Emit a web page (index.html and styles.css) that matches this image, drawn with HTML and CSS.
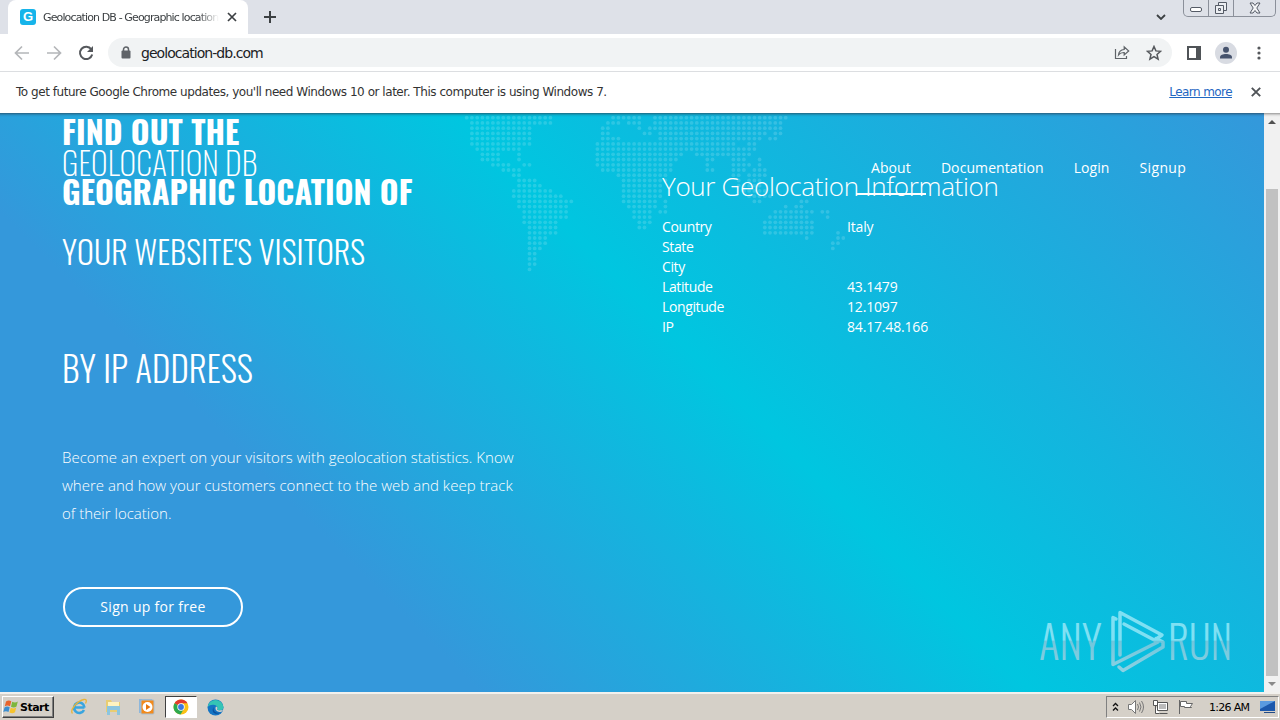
FILE: index.html
```html
<!DOCTYPE html>
<html lang="en">
<head>
    <meta charset="UTF-8" />
    <title>Geolocation DB - Geographic location</title>
    <link rel="stylesheet" href="styles.css">
</head>
<body>
<div class="tabstrip">
    <div class="tab">
        <span class="favicon">G</span>
        <span class="tab-title">Geolocation DB - Geographic location</span>
        <svg class="tab-close" width="10" height="10" viewBox="0 0 10 10"><path d="M1 1l8 8M9 1l-8 8" stroke="#3c4043" stroke-width="1.7"/></svg>
    </div>
    <svg class="new-tab" width="12" height="12" viewBox="0 0 12 12"><path d="M6 0v12M0 6h12" stroke="#3c4043" stroke-width="2"/></svg>
    <svg class="tab-search" width="10" height="6" viewBox="0 0 10 6"><path d="M1 1l4 4 4-4" fill="none" stroke="#3c4043" stroke-width="1.8"/></svg>
    <div class="window-buttons">
        <span class="win-min"><svg width="13" height="6"><rect x=".5" y=".5" width="11" height="4" rx="1.5" fill="#fff" stroke="#555b66"/></svg></span>
        <span class="win-max"><svg width="14" height="14" fill="#eceef2" stroke="#555b66"><path d="M4.500 1.500h8v8h-8z"/><path d="M1.500 4.500h8v8h-8z"/><path d="M4.500 7.500h2v2h-2z"/></svg></span>
        <span class="win-close"><svg width="12" height="12" viewBox="0 0 12 12"><path d="M1 1h3l2 2.500 2-2.500h3L7.800 6 11 11H8L6 8.500 4 11H1l3.200-5z" fill="#f4f5f7" stroke="#555b66"/></svg></span>
    </div>
</div>

<div class="toolbar">
    <svg class="nav-icon" width="16" height="16" viewBox="0 0 16 16" fill="none" stroke="#b4b6b9" stroke-width="1.700"><path d="M15 8H2M8 1.500L1.500 8 8 14.500"/></svg>
    <svg class="nav-icon" width="16" height="16" viewBox="0 0 16 16" fill="none" stroke="#b4b6b9" stroke-width="1.700"><path d="M1 8h13M8 1.500L14.500 8 8 14.500"/></svg>
    <svg class="nav-icon" width="16" height="16" viewBox="0 0 16 16"><path d="M13.300 4.300A6.200 6.200 0 1 0 14.200 9.500" fill="none" stroke="#55585c" stroke-width="2"/><path d="M15 1v6H9z" fill="#55585c"/></svg>
    <div class="omnibox">
        <svg width="10" height="13" viewBox="0 0 10 13"><path d="M2.500 6V3.500a2.500 2.500 0 0 1 5 0V6" fill="none" stroke="#5f6368" stroke-width="1.500"/><rect x=".5" y="4.500" width="9" height="8" rx="1" fill="#5f6368"/></svg>
        <span class="url">geolocation-db.com</span>
        <svg class="share" width="16" height="15" viewBox="0 0 16 15" fill="none" stroke="#5f6368" stroke-width="1.200"><path d="M1.500 4v9.500h11V11"/><path d="M4.500 10c.3-3.500 2.500-5.300 5.700-5.500V1.800L14.700 6l-4.500 4V7.500C7.500 7.400 5.800 8.200 4.500 10z"/></svg>
        <svg width="16" height="16" viewBox="0 0 16 16"><path d="M8 1.500l1.900 4.400 4.700.4-3.600 3.100 1.100 4.700L8 11.600l-4.100 2.500L5 9.400 1.400 6.300l4.700-.4z" fill="none" stroke="#55585c" stroke-width="1.500"/></svg>
    </div>
    <svg class="side-panel" width="14" height="14" viewBox="0 0 14 14"><path d="M1 1h12v12H1z" fill="none" stroke="#4f5357" stroke-width="2"/><path d="M9 1h4v12H9z" fill="#4f5357"/></svg>
    <svg class="avatar" width="22" height="22" viewBox="0 0 22 22"><circle cx="11" cy="11" r="11" fill="#d8dbe2"/><circle cx="11" cy="7.800" r="3" fill="#46536d"/><path d="M5 16.500v-1.300c0-2 3-3.200 6-3.200s6 1.200 6 3.200v1.300z" fill="#46536d"/></svg>
    <svg class="menu-dots" width="4" height="14" viewBox="0 0 4 14" fill="#55585c"><circle cx="2" cy="2" r="1.600"/><circle cx="2" cy="7" r="1.600"/><circle cx="2" cy="12" r="1.600"/></svg>
</div>

<div class="infobar">
    <span class="infobar-text">To get future Google Chrome updates, you'll need Windows 10 or later. This computer is using Windows 7.</span>
    <a class="learn-more">Learn more</a>
    <svg width="10" height="12" viewBox="0 0 10 12"><path d="M.8.8l8.400 8.400M9.200.8L.8 9.200" stroke="#4f5357" stroke-width="1.900"/></svg>
</div>

<div class="viewport">
    <main class="hero">
        <svg class="world-map" id="worldMap" width="400" height="165"></svg>
        <section class="intro">
            <h1>
                <span class="line bold">Find out the</span>
                <span class="line thin brand">Geolocation DB</span>
                <span class="line bold geo">Geographic location of</span>
                <span class="line thin visitors">your website's visitors</span>
                <span class="line thin by-ip">by IP address</span>
            </h1>
            <p>Become an expert on your visitors with geolocation statistics. Know<br>where and how your customers connect to the web and keep track<br>of their location.</p>
            <a class="signup-button">Sign up for free</a>
        </section>
        <section class="info">
            <nav class="site-nav">
                <a class="active">About</a>
                <a>Documentation</a>
                <a>Login</a>
                <a class="signup">Signup</a>
            </nav>
            <h2>Your Geolocation Information</h2>
            <dl>
                <dt>Country</dt><dd>Italy</dd>
                <dt>State</dt><dd></dd>
                <dt>City</dt><dd></dd>
                <dt>Latitude</dt><dd>43.1479</dd>
                <dt>Longitude</dt><dd>12.1097</dd>
                <dt>IP</dt><dd>84.17.48.166</dd>
            </dl>
        </section>
        <svg class="watermark" width="200" height="70" viewBox="0 0 200 70">
            <defs>
                <linearGradient id="wm" x1="0" y1="0" x2="0" y2="70" gradientUnits="userSpaceOnUse">
                    <stop offset="0.500" stop-color="#7fe0f3"/>
                    <stop offset="0.520" stop-color="#70c6dc"/>
                    <stop offset="1" stop-color="#8ed3e4"/>
                </linearGradient>
            </defs>
            <g fill="url(#wm)" font-family="Oswald, 'Open Sans'" font-size="46" font-weight="350">
                <text x="3" y="54.500" textLength="63" lengthAdjust="spacingAndGlyphs">ANY</text>
                <text x="132" y="54.500" textLength="64" lengthAdjust="spacingAndGlyphs">RUN</text>
            </g>
            <g fill="none" stroke="url(#wm)" stroke-width="3.500" stroke-linejoin="round" stroke-linecap="round">
                <path d="M80 14l-3-1.500v47L122 37 88 19"/>
                <path d="M84 50V7.500L126 30l-5 3.500"/>
                <path d="M83 62l4 3.500L127 42v-5l-7-3.500"/>
            </g>
        </svg>
    </main>
    <div class="scrollbar">
        <span class="arrow up"></span>
        <span class="thumb"></span>
        <span class="arrow down"></span>
    </div>
</div>

<footer class="taskbar">
    <div class="start">
        <svg width="17" height="16" viewBox="0 0 17 16"><path d="M3 2.500c2-1.500 3.700-1.300 5.300-.3L7 7.200C5.300 6.200 3.600 6.100 1.800 7.300z" fill="#e8642c"/><path d="M9.200 2.700c2 1 3.700 1 5.600-.2l-1.300 5c-1.900 1.200-3.600 1.100-5.500.2z" fill="#7db63c"/><path d="M1.500 8.400C3.300 7.200 5 7.300 6.700 8.300l-1.200 4.700C3.800 12 2 12 .3 13z" fill="#3c8ed0"/><path d="M7.700 8.700c1.900.9 3.600 1 5.500-.2L12 13.300c-2 1.300-3.700 1.100-5.500.2z" fill="#f6c32e"/></svg>
        <b>Start</b>
    </div>
    <div class="pinned">
        <span><svg width="18" height="18" viewBox="0 0 18 18"><path d="M14.500 9.500H5M14 12a5.200 5.200 0 1 1 .5-2.500" fill="none" stroke="#39a5df" stroke-width="2.600"/><path d="M2.500 15.500C-.5 12 7 3 14 1.500c3-.5 2.500 2 1.500 4" fill="none" stroke="#e8b43a" stroke-width="1.300"/></svg></span>
        <span><svg width="18" height="18" viewBox="0 0 18 18"><path d="M2 2h5l1 2h8v10H2z" fill="#e9cd72"/><path d="M4 4h11v4H4z" fill="#fff3bf"/><path d="M3 8h13v9h-3v-5H6v5H3z" fill="#8cc5df"/></svg></span>
        <span><svg width="18" height="18" viewBox="0 0 18 18"><rect x="1" y="1" width="13" height="14" fill="#8db7dc"/><rect x="3" y="2" width="13" height="14" rx="1" fill="#f28a1b" stroke="#a9bed0"/><circle cx="9.500" cy="9" r="5" fill="#fff"/><path d="M8 6l4.500 3L8 12z" fill="#e8760c"/></svg></span>
        <span class="current"><svg width="16" height="16" viewBox="0 0 16 16"><circle cx="8" cy="8" r="7.500" fill="#fbc116"/><path d="M8 8L1.500 4.250A7.500 7.500 0 0 1 14.500 4.250H8z" fill="#e33b2e"/><path d="M8 8L1.500 4.250A7.500 7.500 0 0 0 7.500 15.500L11 9.800z" fill="#2da94f"/><circle cx="8" cy="8" r="3.700" fill="#fff"/><circle cx="8" cy="8" r="2.900" fill="#3c78e0"/></svg></span>
        <span><svg width="17" height="17" viewBox="0 0 17 17"><circle cx="8.500" cy="8.500" r="8" fill="#1474c4"/><path d="M.6 8A8 8 0 0 1 16.500 8c0 2.500-2 3.500-4.500 3.300-2-.2-2-1.300-1.500-2.300C11 6 4 4 .6 8z" fill="#35c4b5"/><path d="M7 8c-1.500 3 1 7 6.500 5.500C9 17 3 13 7 8z" fill="#0c4f9c"/><path d="M9 7.500c2 .5 1.500 2 1 3 1.500 1.500 4.500 1 6 0l-.8 2C11 14 7 11 9 7.500z" fill="#d6d3cc"/></svg></span>
    </div>
    <div class="tray">
        <svg width="7" height="10" viewBox="0 0 7 10" fill="none" stroke="#111" stroke-width="1.300"><path d="M1 4l2.500-2.500L6 4M1 8.500L3.500 6 6 8.500"/></svg>
        <svg width="17" height="16" viewBox="0 0 17 16" fill="none" stroke="#777"><path d="M1.500 5.500h3l4-4v13l-4-4h-3z" fill="#fff"/><path d="M10.500 5q2 3 0 6M12.500 3.500q3 4.500 0 9M14.500 2q4 6 0 12"/></svg>
        <svg width="17" height="16" viewBox="0 0 17 16" fill="#fff" stroke="#555"><path d="M5.500 3.500h10v8h-10zM7.500 14.500h8M1.500 1.500h4v5h-4zM3.500 6.500v8h4"/><path d="M7 5h7v5H7z" fill="#bbb" stroke="none"/></svg>
        <svg width="17" height="16" viewBox="0 0 17 16" fill="#fff" stroke="#666"><path d="M2.500 1v14"/><path d="M3.500 2.500h6v2h6l-2 3 1 1h-7v-1h-4z"/></svg>
        <span class="clock">1:26 AM</span>
        <svg width="16" height="14" viewBox="0 0 16 14"><path d="M0 1h15v10H0z" fill="#1c58ac"/><path d="M0 1h15L0 9z" fill="#5a9ae0"/><path d="M4 12h11v1H4z" fill="#234b85"/></svg>
    </div>
</footer>

<script>
    // column ranges of the dots, one entry per row
    const rows = [
        [[0,16],[28,33],[36,61]],
        [[1,16],[27,29],[31,33],[36,60]],
        [[1,12],[26,27],[33,33],[35,60]],
        [[1,12],[26,27],[34,35],[37,57],[59,60]],
        [[1,12],[26,29],[37,56],[58,59]],
        [[1,12],[25,51],[54,55]],
        [[2,10],[25,55]],
        [[3,6],[10,10],[25,41],[44,54]],
        [[3,6],[10,10],[25,40],[46,47],[51,53],[56,56]],
        [[5,8],[11,12],[25,39],[46,46],[51,54],[56,56]],
        [[7,10],[26,39],[46,47],[51,53],[55,57]],
        [[9,10],[29,38],[51,52],[54,57]],
        [[10,13],[30,38],[52,52],[54,56]],
        [[10,14],[30,37],[52,56]],
        [[9,16],[30,37],[53,57]],
        [[9,18],[30,37],[54,58]],
        [[10,20],[30,36],[38,38],[55,56],[64,65]],
        [[10,19],[31,36],[38,38],[61,61],[63,64]],
        [[11,19],[32,35],[37,38],[59,66],[68,69]],
        [[11,19],[32,35],[58,65],[69,69]],
        [[11,17],[33,35],[57,66]],
        [[12,17],[33,34],[57,66]],
        [[12,17],[57,66],[71,71]],
        [[12,15],[65,65],[71,72]],
        [[12,15],[70,71]],
        [[12,14],[70,70]],
        [[12,13]],
        [[12,13]],
        [[12,13]],
        [[12,12]]
    ];

    const map = document.getElementById('worldMap');
    let dots = '';
    rows.forEach((ranges, r) => {
        ranges.forEach(([from, to]) => {
            for (let c = from; c <= to; c++) {
                dots += `<circle cx="${(2.7 + c * 5.23).toFixed(1)}" cy="${(4.7 + r * 5.23).toFixed(1)}" r="1.9"/>`;
            }
        });
    });
    map.innerHTML = dots;
</script>
</body>
</html>
```
FILE: styles.css
```css
* {
    box-sizing: border-box;
}
body {
    margin: 0;
    width: 1280px;
    height: 720px;
    overflow: hidden;
    display: flex;
    flex-direction: column;
    font-family: "DejaVu Sans", sans-serif;
    background: #fff;
}
svg {
    flex: none;
    display: block;
}
h1, h2, p, dl, dd {
    margin: 0;
}
.tabstrip {
    height: 34px;
    flex: none;
    background: #dee1e8;
    display: flex;
    padding-left: 8px;
}
.tab {
    width: 240px;
    height: 34px;
    background: #fff;
    border-radius: 8px 8px 0 0;
    display: flex;
    align-items: center;
    padding-left: 12px;
}
.favicon {
    width: 16px;
    height: 16px;
    border-radius: 3px;
    background: #16b4ea;
    color: #fff;
    font: bold 13px/16px "Liberation Sans", sans-serif;
    text-align: center;
}
.tab-title {
    width: 176px;
    margin-left: 7px;
    overflow: hidden;
    white-space: nowrap;
    font-size: 11px;
    letter-spacing: -0.87px;
    color: #3c4043;
    -webkit-mask-image: linear-gradient(90deg, #000 155px, transparent);
}
.tab-close {
    margin-left: 8px;
}
.new-tab {
    margin: 11px 0 0 16px;
}
.tab-search {
    margin: 14px 17px 0 auto;
}
.window-buttons {
    width: 93px;
    height: 17px;
    margin-right: 4px;
    border: 1px solid #8b909a;
    border-top: 0;
    border-radius: 0 0 5px 5px;
    display: flex;
}
.window-buttons span {
    display: flex;
    align-items: center;
    justify-content: center;
    border-right: 1px solid #8b909a;
}
.window-buttons .win-min {
    width: 25px;
    padding-top: 4px;
}
.window-buttons .win-max {
    width: 25px;
}
.window-buttons .win-close {
    flex: 1;
    border: 0;
}
.toolbar {
    height: 38px;
    flex: none;
    display: flex;
    align-items: center;
    padding-left: 14px;
    border-bottom: 1px solid #dcdee1;
}
.nav-icon {
    margin-right: 16px;
}
.omnibox {
    width: 1064px;
    height: 29px;
    margin-left: -2px;
    border-radius: 15px;
    background: #f1f3f4;
    display: flex;
    align-items: center;
    padding: 0 10px 0 13px;
}
.url {
    margin-left: 10px;
    font-size: 14px;
    letter-spacing: -0.95px;
    color: #202124;
}
.share {
    margin: 0 16px 0 auto;
}
.side-panel {
    margin-left: 15px;
}
.avatar {
    margin-left: 14px;
}
.menu-dots {
    margin-left: 20px;
}
.infobar {
    height: 41px;
    flex: none;
    display: flex;
    align-items: center;
    padding: 0 19px 0 16px;
    font-size: 12px;
    color: #333;
    letter-spacing: -0.46px;
    white-space: nowrap;
}
.infobar span, .infobar a {
    padding-bottom: 2px;
}
.learn-more {
    margin: 0 19px 0 auto;
    color: #1f67c2;
    letter-spacing: -0.57px;
    text-decoration: underline;
}
.viewport {
    height: 579px;
    flex: none;
    display: flex;
}
.hero {
    width: 1264px;
    position: relative;
    display: flex;
    overflow: hidden;
    color: #fff;
    font-family: "Open Sans", sans-serif;
    box-shadow: inset 0 5px 3px -4px rgba(40, 60, 80, 0.8);
    background: linear-gradient(45deg, #3498db 0%, #3498db 26%, #00c6e0 56%, #3498db 100%);
}
/* dotted map lies behind both columns */
.world-map {
    position: absolute;
    left: 464px;
    top: 0;
    fill: rgba(255, 255, 255, 0.15);
}
.intro {
    width: 662px;
    padding: 3px 0 0 62px;
    display: flex;
    flex-direction: column;
    align-items: flex-start;
    position: relative;
}
h1 {
    display: flex;
    flex-direction: column;
    align-items: flex-start;
    font-family: Oswald, "Open Sans", sans-serif;
    text-transform: uppercase;
    font-size: 32px;
    letter-spacing: 0.08px;
}
.line {
    height: 30px;
    line-height: 30px;
    white-space: nowrap;
}
.bold {
    font-weight: 700;
}
.thin {
    font-weight: 300;
}
.brand {
    height: 29px;
    margin-top: 1px;
    font-weight: 250;
}
.visitors {
    margin-top: 30px;
}
.by-ip {
    margin-top: 86px;
    font-size: 35px;
}
.intro p {
    margin-top: 61px;
    font-size: 15px;
    font-weight: 300;
    line-height: 28px;
    letter-spacing: 0.01px;
    white-space: nowrap;
}
.signup-button {
    width: 180px;
    height: 40px;
    margin: 60px 0 0 1px;
    border: 2px solid #fff;
    border-radius: 20px;
    font-size: 14px;
    line-height: 36px;
    letter-spacing: 0.3px;
    text-align: center;
}
.info {
    flex: 1;
    padding-top: 42px;
    position: relative;
}
.site-nav {
    height: 16px;
    padding-left: 209px;
    display: flex;
    gap: 30px;
    font-size: 14px;
    line-height: 26px;
    letter-spacing: 0.09px;
}
.site-nav a {
    position: relative;
    height: 26px;
}
.site-nav .signup {
    letter-spacing: 0.35px;
}
.site-nav .active::after {
    content: "";
    position: absolute;
    left: -15px;
    top: 38px;
    width: 70px;
    height: 2px;
    background: #fff;
}
h2 {
    font-size: 26px;
    font-weight: 300;
    line-height: 30px;
    letter-spacing: -0.33px;
    white-space: nowrap;
}
dl {
    display: grid;
    grid-template-columns: 185px 200px;
    grid-auto-rows: 20px;
    margin-top: 16px;
    font-size: 14px;
    line-height: 20px;
}
dt {
    letter-spacing: -0.38px;
}
dd {
    letter-spacing: -0.17px;
}
.watermark {
    position: absolute;
    left: 1036px;
    top: 492px;
}
.scrollbar {
    width: 16px;
    background: #f1f1f1;
    display: flex;
    flex-direction: column;
    align-items: center;
    box-shadow: inset 0 5px 3px -4px rgba(60, 60, 60, 0.6);
}
.arrow {
    border: 4px solid transparent;
}
.arrow.up {
    margin-top: 3px;
    border-bottom-color: #505050;
}
.arrow.down {
    margin-top: 6px;
    border-top-color: #8a8a8a;
}
.thumb {
    width: 12px;
    height: 487px;
    margin-top: 65px;
    background: #c1c1c1;
}
.taskbar {
    height: 28px;
    flex: none;
    background: #d5d0c8;
    border-top: 2px solid #f2f1ee;
    display: flex;
    align-items: center;
    padding-left: 2px;
    color: #000;
}
.start {
    width: 52px;
    height: 22px;
    background: #d5d0c8;
    border: 1px solid;
    border-color: #fff #404040 #404040 #fff;
    box-shadow: inset -1px -1px #808080;
    display: flex;
    align-items: center;
    font-size: 11px;
    letter-spacing: -0.5px;
}
.pinned {
    display: flex;
    margin-left: 9px;
}
.pinned span {
    width: 32px;
    height: 22px;
    margin-right: 2px;
    display: flex;
    align-items: center;
    justify-content: center;
}
.pinned .current {
    background: #fff;
    border: 1px solid;
    border-color: #404040 #fff #fff #404040;
}
.tray {
    width: 173px;
    height: 22px;
    margin-left: auto;
    margin-right: 1px;
    border: 1px solid;
    border-color: #808080 #fff #fff #808080;
    display: flex;
    align-items: center;
    gap: 8px;
    padding-left: 5px;
}
.clock {
    width: 43px;
    margin-left: 7px;
    font-size: 11px;
    letter-spacing: -0.7px;
    white-space: nowrap;
}
```
